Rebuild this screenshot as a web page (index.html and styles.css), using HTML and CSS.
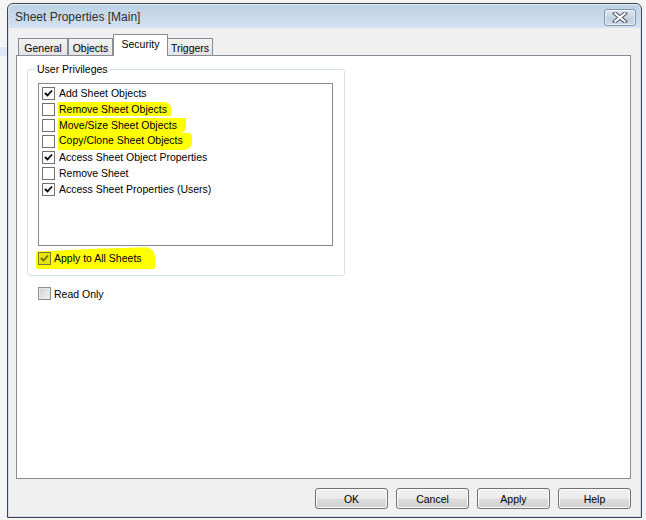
FILE: index.html
```html
<!DOCTYPE html>
<html>
<head>
<meta charset="utf-8">
<link rel="stylesheet" href="styles.css">
</head>
<body>
<div class="backdrop-band"></div>
<div class="window">
  <div class="titlebar">
    <span class="title">Sheet Properties [Main]</span>
    <button class="close" aria-label="Close">
      <svg width="16" height="11" viewBox="0 0 16 11">
        <path d="M3 1.5 L13 9.5 M13 1.5 L3 9.5" stroke="#4a4f57" stroke-width="4" stroke-linecap="square" fill="none"/>
        <path d="M3 1.5 L13 9.5 M13 1.5 L3 9.5" stroke="#ffffff" stroke-width="2" stroke-linecap="square" fill="none"/>
      </svg>
    </button>
  </div>
  <div class="client">
    <div class="tabs">
      <div class="tab tab-general">General</div>
      <div class="tab tab-objects">Objects</div>
      <div class="tab tab-security selected">Security</div>
      <div class="tab tab-triggers">Triggers</div>
    </div>
    <div class="panel">
      <fieldset class="group">
        <legend>User Privileges</legend>
        <div class="listbox">
          <div class="row"><span class="cb checked"><svg viewBox="0 0 11 11"><path d="M2 5 L4.5 7.5 L9 2.5" /></svg></span><span class="label">Add Sheet Objects</span></div>
          <div class="row"><span class="cb"></span><span class="label hl hl-1">Remove Sheet Objects</span></div>
          <div class="row"><span class="cb"></span><span class="label hl hl-2">Move/Size Sheet Objects</span></div>
          <div class="row"><span class="cb"></span><span class="label hl hl-3">Copy/Clone Sheet Objects</span></div>
          <div class="row"><span class="cb checked"><svg viewBox="0 0 11 11"><path d="M2 5 L4.5 7.5 L9 2.5" /></svg></span><span class="label">Access Sheet Object Properties</span></div>
          <div class="row"><span class="cb"></span><span class="label">Remove Sheet</span></div>
          <div class="row"><span class="cb checked"><svg viewBox="0 0 11 11"><path d="M2 5 L4.5 7.5 L9 2.5" /></svg></span><span class="label">Access Sheet Properties (Users)</span></div>
        </div>
        <div class="check-line apply">
          <span class="cb cb-apply"><svg viewBox="0 0 11 11"><path d="M2 5 L4.5 7.5 L9 2.5" /></svg></span>
          <span class="check-text">Apply to All Sheets</span>
        </div>
      </fieldset>
      <div class="check-line readonly">
        <span class="cb cb-ro"></span>
        <span class="check-text">Read Only</span>
      </div>
    </div>
    <div class="buttons">
      <button class="btn">OK</button>
      <button class="btn">Cancel</button>
      <button class="btn">Apply</button>
      <button class="btn">Help</button>
    </div>
  </div>
</div>
</body>
</html>
```

FILE: styles.css
```css
html, body {
  margin: 0;
  padding: 0;
}
body {
  width: 646px;
  height: 520px;
  background: #f4f4f4;
  font-family: "Liberation Sans", Arial, sans-serif;
  font-size: 10.5px;
  color: #000;
  overflow: hidden;
  position: relative;
}
.backdrop-band {
  position: absolute;
  left: 0;
  top: 47px;
  width: 8px;
  height: 9px;
  background: #dfe8f4;
}
.window {
  position: relative;
  margin: 3px 0 0 7px;
  width: 631px;
  height: 512px;
  border: 1px solid #404449;
  border-radius: 6px 6px 0 0;
  background: #cddcee;
  padding: 0 1px 1px 1px;
  box-sizing: content-box;
  display: flex;
  flex-direction: column;
}
.titlebar {
  height: 24px;
  flex: none;
  display: flex;
  align-items: center;
  padding: 0 3px 0 6px;
  border-radius: 5px 5px 0 0;
  background: linear-gradient(#bcd0e4, #d3e1f0);
  box-shadow: inset 0 1px 0 #e6eef7;
}
.title {
  font-family: "Liberation Sans", Arial, sans-serif;
  font-size: 12px;
  color: #2e2e2e;
  flex: 1;
  padding-top: 2px;
}
.close {
  width: 32px;
  height: 17px;
  margin-top: 2px;
  margin-right: 1px;
  padding: 0;
  border: 1px solid #8494a8;
  border-radius: 3px;
  background: linear-gradient(#dfe7f1, #c9d6e5 50%, #bfcde0 51%, #cfdcea);
  box-shadow: inset 0 0 0 1px rgba(255,255,255,0.55);
  display: flex;
  align-items: center;
  justify-content: center;
}
.close svg { display: block; }

.client {
  flex: 1;
  background: #f0f0f0;
  display: flex;
  flex-direction: column;
  padding: 6px 8px 0 7px;
}
.tabs {
  height: 21px;
  display: flex;
  align-items: flex-end;
  padding-left: 2px;
  position: relative;
  z-index: 2;
}
.tab {
  height: 17px;
  box-sizing: border-box;
  border: 1px solid #898c95;
  border-bottom: none;
  background: linear-gradient(#f2f2f2, #e3e3e3);
  display: flex;
  align-items: center;
  justify-content: center;
  padding-top: 1px;
}
.tab-general { width: 50px; }
.tab-objects { width: 45px; margin-left: 0; }
.tab-security { width: 55px; }
.tab-triggers { width: 46px; margin-left: -1px; }
.tab.selected {
  height: 22px;
  margin-bottom: -1px;
  background: #ffffff;
  align-items: flex-start;
  padding-top: 3px;
}
.panel {
  width: 615px;
  height: 424px;
  box-sizing: border-box;
  border: 1px solid #898c95;
  background: #ffffff;
  padding: 7px 0 0 10px;
  position: relative;
  z-index: 1;
}
.group {
  margin: 0;
  width: 318px;
  height: 213px;
  box-sizing: border-box;
  border: 1px solid #d5dfe5;
  border-radius: 3px;
  padding: 8px 0 0 10px;
  min-inline-size: 0;
}
.group legend {
  padding: 0 2px;
  margin-left: -3px;
  line-height: 12px;
}
.listbox {
  width: 295px;
  height: 163px;
  box-sizing: border-box;
  border: 1px solid #828790;
  padding: 1px 0 0 3px;
  display: flex;
  flex-direction: column;
}
.row {
  height: 16px;
  display: flex;
  align-items: center;
}
.cb {
  width: 13px;
  height: 13px;
  box-sizing: border-box;
  border: 1px solid #707070;
  background: #ffffff;
  flex: none;
  display: flex;
  align-items: center;
  justify-content: center;
}
.cb svg {
  width: 11px;
  height: 11px;
  display: block;
}
.cb svg path {
  fill: none;
  stroke: #000;
  stroke-width: 1.8;
}
.label {
  margin-left: 4px;
  line-height: 14px;
  white-space: nowrap;
}
.hl {
  background: #ffff00;
  margin-left: 3px;
  padding: 0 8px 0 1px;
}
.hl-1 { padding-right: 4px; height: 14px; border-radius: 0 6px 0 0; }
.hl-2 { padding-right: 9px; height: 15px; margin-top: 1px; border-radius: 0 0 6px 0; }
.hl-3 { padding-right: 9px; height: 17px; line-height: 15px; margin-top: 1px; border-radius: 0 4px 8px 0; }

.check-line {
  display: flex;
  align-items: center;
  white-space: nowrap;
}
.check-text { margin-left: 3px; }
.apply {
  margin-top: 1px;
  margin-left: -2px;
  width: 117px;
  height: 22px;
  padding-left: 2px;
  background: #ffff00;
  border-radius: 8px 10px 2px 2px;
  clip-path: polygon(0 20%, 50% 8%, 100% 0, 100% 100%, 0 100%);
}
.cb-apply {
  border-color: #7b7b2e;
  background: #e6e600;
}
.cb-apply svg path { stroke: #6a6a00; }
.readonly {
  margin-top: 11px;
  margin-left: 11px;
}
.cb-ro {
  border-color: #8e8f8f;
  background: linear-gradient(135deg, #cfcfcf, #f4f4f4);
  box-shadow: inset 0 0 0 1px #e8e8e8;
}

.buttons {
  display: flex;
  justify-content: flex-end;
  gap: 8px;
  margin-top: 9px;
  margin-right: 1px;
}
.btn {
  width: 73px;
  height: 21px;
  padding: 0;
  font-family: "Liberation Sans", Arial, sans-serif;
  font-size: 10.5px;
  color: #000;
  border: 1px solid #707070;
  border-radius: 3px;
  background: linear-gradient(#f2f2f2 0%, #ebebeb 48%, #dddddd 52%, #cfcfcf 100%);
  box-shadow: inset 0 0 0 1px #fcfcfc;
}
```
